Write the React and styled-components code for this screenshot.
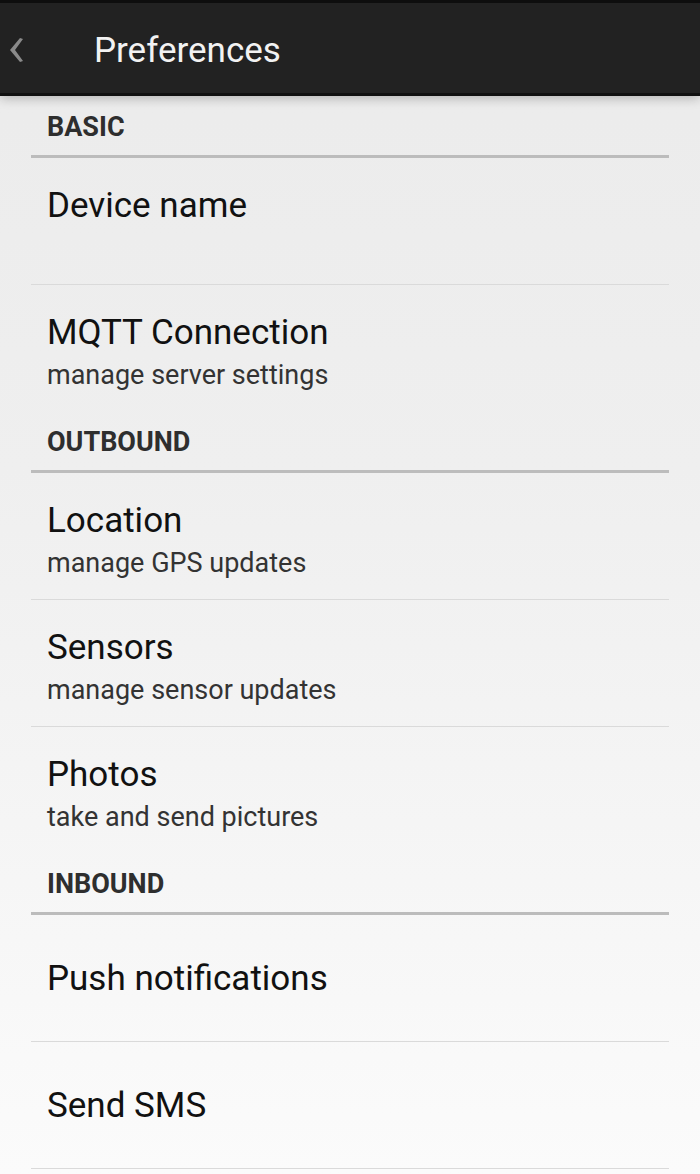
import React from "react";
import styled, { createGlobalStyle } from "styled-components";

const GlobalStyle = createGlobalStyle`
  html, body {
    margin: 0;
    padding: 0;
  }
  body {
    font-family: Roboto, "Noto Sans", sans-serif;
    background: #fbfbfb;
    min-height: 1174px;
  }
`;

const Page = styled.div`
  width: 700px;
  min-height: 1174px;
  background: linear-gradient(#ebebeb 0%, #efefef 40%, #fbfbfb 100%);
`;

const ActionBar = styled.header`
  display: flex;
  align-items: center;
  height: 90px;
  box-sizing: content-box;
  padding-top: 0;
  background-color: #222;
  border-top: 3px solid #0e0e0e;
  border-bottom: 3px solid #111;
  box-shadow: 0 3px 10px rgba(0, 0, 0, 0.22);
  position: relative;
`;

const BarInner = styled.div`
  display: flex;
  align-items: center;
  margin-top: 4px;
`;

const BackButton = styled.div`
  display: flex;
  align-items: center;
  width: 94px;
  padding-left: 8px;
  box-sizing: border-box;
`;

const Title = styled.h1`
  margin: 0;
  font-size: 35px;
  font-weight: 400;
  color: #f2f2f2;
`;

const List = styled.div`
  display: flex;
  flex-direction: column;
  padding: 0 31px;
`;

const SectionHeader = styled.div`
  height: 62px;
  box-sizing: border-box;
  padding: 15px 0 0 16px;
  border-bottom: 3px solid #bcbcbc;
  font-size: 27px;
  line-height: 32px;
  font-weight: 700;
  color: #2e2e2e;
`;

const Row = styled.div`
  display: flex;
  flex-direction: column;
  justify-content: ${(p) => (p.$center ? "center" : "flex-start")};
  height: ${(p) => (p.$last ? 126 : 127)}px;
  box-sizing: border-box;
  padding: ${(p) => (p.$center ? "2px" : "27px")} 0 0 16px;
  border-bottom: ${(p) => (p.$last ? "none" : "1px solid #dadada")};
`;

const RowTitle = styled.div`
  font-size: 35px;
  line-height: 42px;
  color: #111;
`;

const RowSummary = styled.div`
  margin-top: 5px;
  font-size: 27px;
  line-height: 32px;
  color: #333;
`;

const Chevron = () => (
  <svg width="16" height="26" viewBox="0 0 16 26">
    <polygon points="12,1 15,2 7,13 15,24 12,25 2,13" fill="#8a8a8a" />
  </svg>
);

const Pref = ({ title, summary, center, last }) => (
  <Row $center={center} $last={last}>
    <RowTitle>{title}</RowTitle>
    {summary && <RowSummary>{summary}</RowSummary>}
  </Row>
);

const App = () => {
  return (
    <Page>
      <GlobalStyle />
      <ActionBar>
        <BarInner>
          <BackButton>
            <Chevron />
          </BackButton>
          <Title>Preferences</Title>
        </BarInner>
      </ActionBar>
      <List>
        <SectionHeader>BASIC</SectionHeader>
        <Pref title="Device name" />
        <Pref title="MQTT Connection" summary="manage server settings" last />
        <SectionHeader>OUTBOUND</SectionHeader>
        <Pref title="Location" summary="manage GPS updates" />
        <Pref title="Sensors" summary="manage sensor updates" />
        <Pref title="Photos" summary="take and send pictures" last />
        <SectionHeader>INBOUND</SectionHeader>
        <Pref title="Push notifications" center />
        <Pref title="Send SMS" center />
      </List>
    </Page>
  );
};

export default App;
